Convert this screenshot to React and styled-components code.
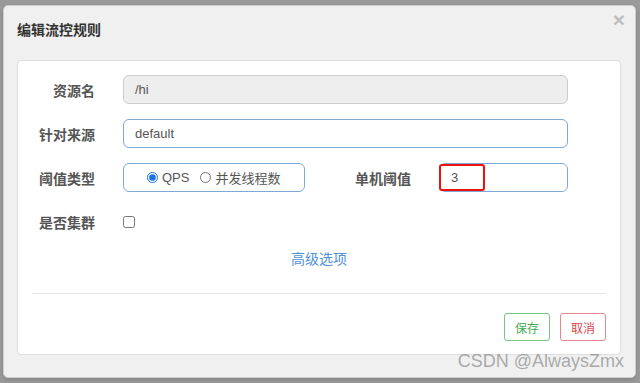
import React from 'react';
import styled, { createGlobalStyle } from 'styled-components';

const GlobalStyle = createGlobalStyle`
    html, body {
        margin: 0;
        padding: 0;
        background: #9a9a9a;
    }
    * {
        box-sizing: border-box;
    }
`;

const font = `"Liberation Sans", "Noto Sans CJK SC", sans-serif`;

const Backdrop = styled.div`
    position: relative;
    width: 640px;
    height: 383px;
    padding: 5px 4px 5px 3px;
    font-family: ${font};
`;

const Dialog = styled.div`
    width: 633px;
    height: 373px;
    background: #f0f0f0;
    border: 1px solid #cfcfcf;
    border-radius: 5px;
    box-shadow: 0 2px 4px rgba(0, 0, 0, 0.15);
`;

const Header = styled.div`
    display: flex;
    justify-content: space-between;
    align-items: flex-start;
    height: 54px;
    padding: 0 10px 0 13px;
`;

const Title = styled.h4`
    margin: 16px 0 0 0;
    font-size: 14px;
    line-height: 16px;
    font-weight: bold;
    color: #333;
`;

const Close = styled.button`
    margin-top: 3px;
    padding: 0;
    border: 0;
    background: none;
    font-family: ${font};
    font-size: 21px;
    font-weight: bold;
    line-height: 1;
    color: #bdbdbd;
    cursor: pointer;
`;

const Panel = styled.div`
    margin: 0 14px 0 13px;
    height: 295px;
    background: #fff;
    border: 1px solid #dedede;
    border-radius: 4px;
    padding: 14px 14px 0 0;
`;

const Form = styled.div`
    display: grid;
    row-gap: 15px;
`;

const Row = styled.div`
    display: flex;
    align-items: center;
    height: 29px;
`;

const Label = styled.label`
    width: ${p => p.width || 77}px;
    margin-left: ${p => p.offset || 0}px;
    margin-right: 28px;
    text-align: right;
    font-family: "Noto Sans CJK SC", sans-serif;
    font-size: 14px;
    font-weight: bold;
    color: #555;
    white-space: nowrap;
`;

const Field = styled.div`
    position: relative;
    display: flex;
    align-items: center;
    width: ${p => p.width}px;
    height: 29px;
    padding: 0 11px;
    border: 1px solid ${p => (p.disabled ? '#cccccc' : '#7ea8d8')};
    border-radius: 6px;
    background: ${p => (p.disabled ? '#eeeeee' : '#fff')};
    font-size: 13px;
    color: #555;
`;

const Mark = styled.span`
    position: absolute;
    left: -1px;
    top: 0;
    width: 46px;
    height: 27px;
    border: 2px solid #f01010;
    border-radius: 3px;
`;

const RadioGroup = styled.div`
    display: flex;
    align-items: center;
    width: 182px;
    height: 29px;
    padding-left: 23px;
    border: 1px solid #7ea8d8;
    border-radius: 6px;
    font-size: 13px;
    color: #555;
`;

const Radio = styled.input`
    width: 11px;
    height: 11px;
    margin: 0 4px 0 ${p => p.gap || 0}px;
    accent-color: #1a73e8;
`;

const Check = styled.input`
    width: 12px;
    height: 12px;
    margin: 0;
`;

const Advanced = styled.a`
    display: block;
    margin-top: 14px;
    padding-left: 14px;
    text-align: center;
    font-family: "Noto Sans CJK SC", sans-serif;
    font-size: 14px;
    line-height: 16px;
    color: #4f91d6;
    text-decoration: none;
`;

const Divider = styled.hr`
    margin: 27px 0 0 14px;
    border: 0;
    border-top: 1px solid #e6e6e6;
`;

const Footer = styled.div`
    display: flex;
    justify-content: flex-end;
    gap: 10px;
    padding-top: 19px;
`;

const Button = styled.button`
    width: 46px;
    height: 28px;
    padding: 0;
    background: #fff;
    border: 1px solid ${p => p.tone === 'ok' ? '#72c884' : '#e8868c'};
    border-radius: 3px;
    color: ${p => p.tone === 'ok' ? '#3fae4f' : '#e0464d'};
    font-family: "Noto Sans CJK SC", sans-serif;
    font-size: 12px;
`;

const Watermark = styled.div`
    position: absolute;
    right: 16px;
    bottom: 12px;
    font-family: ${font};
    font-size: 18px;
    line-height: 20px;
    color: rgba(120, 120, 120, 0.6);
    pointer-events: none;
`;

const App = () => (
    <Backdrop>
        <GlobalStyle />
        <Dialog>
            <Header>
                <Title>编辑流控规则</Title>
                <Close>×</Close>
            </Header>
            <Panel>
                <Form>
                    <Row>
                        <Label>资源名</Label>
                        <Field width={445} disabled>/hi</Field>
                    </Row>
                    <Row>
                        <Label>针对来源</Label>
                        <Field width={445}>default</Field>
                    </Row>
                    <Row>
                        <Label>阈值类型</Label>
                        <RadioGroup>
                            <Radio type="radio" name="grade" defaultChecked />
                            QPS
                            <Radio type="radio" name="grade" gap={11} />
                            并发线程数
                        </RadioGroup>
                        <Label width={58} offset={48}>单机阈值</Label>
                        <Field width={129}>
                            3
                            <Mark />
                        </Field>
                    </Row>
                    <Row>
                        <Label>是否集群</Label>
                        <Check type="checkbox" />
                    </Row>
                </Form>
                <Advanced href="#">高级选项</Advanced>
                <Divider />
                <Footer>
                    <Button tone="ok">保存</Button>
                    <Button tone="cancel">取消</Button>
                </Footer>
            </Panel>
        </Dialog>
        <Watermark>CSDN @AlwaysZmx</Watermark>
    </Backdrop>
);

export default App;
